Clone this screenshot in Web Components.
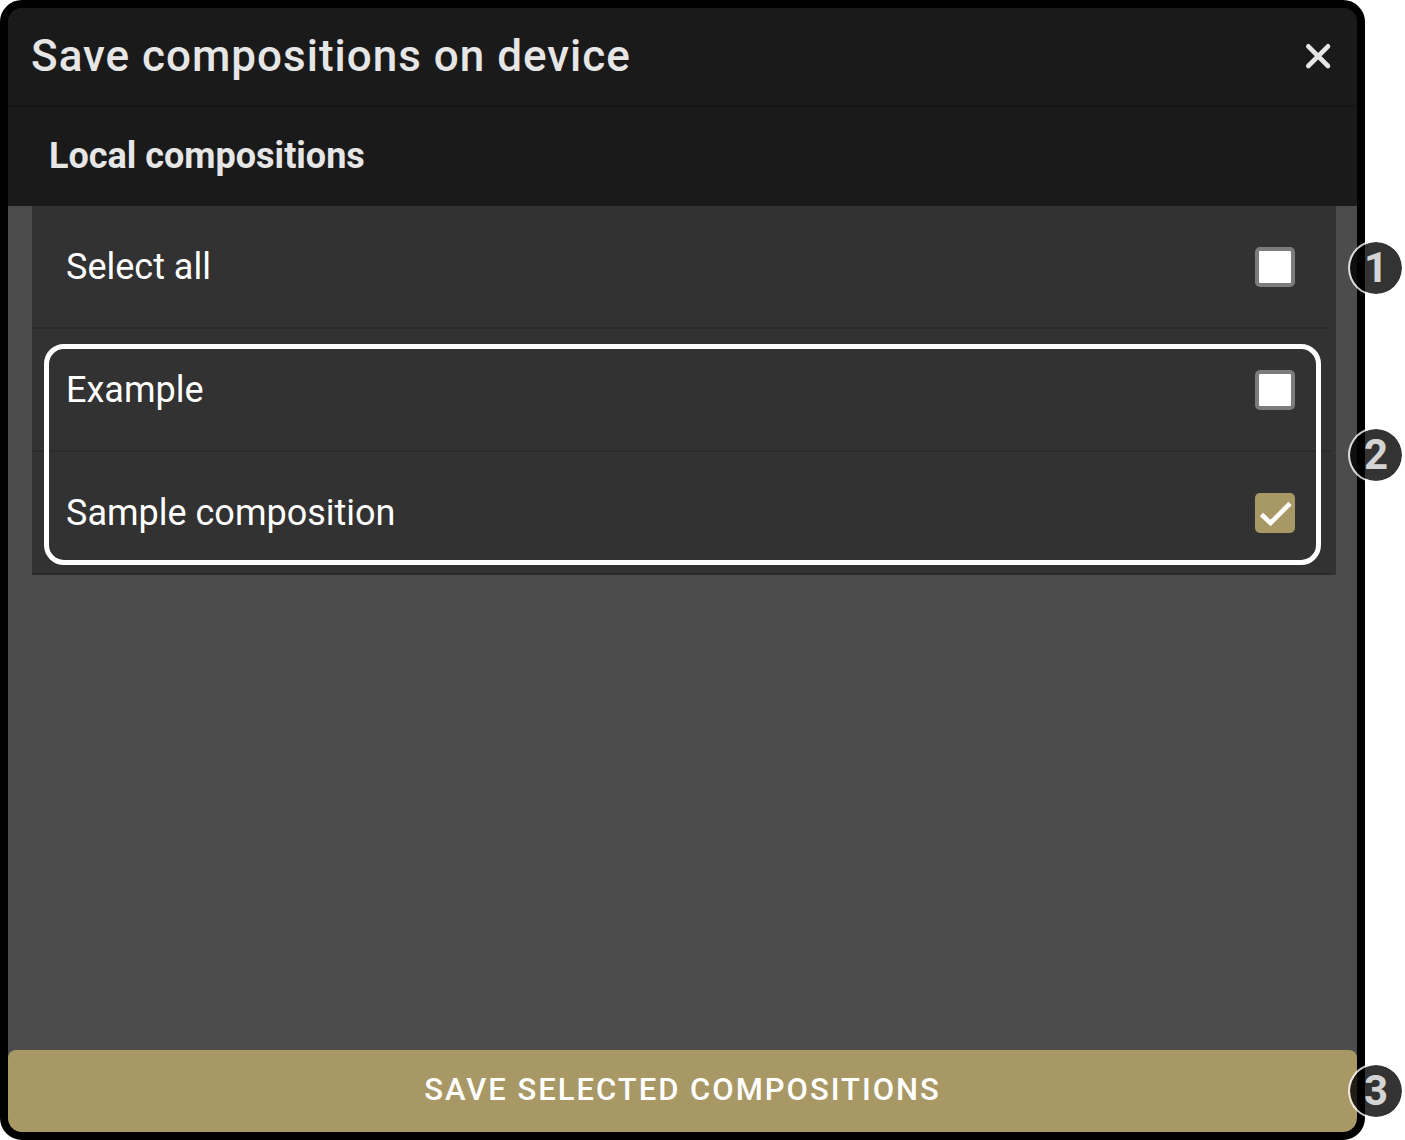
<!DOCTYPE html>
<html lang="en">
<head>
<meta charset="utf-8">
<meta name="viewport" content="width=device-width, initial-scale=1">
<title>Save compositions on device</title>
<style>
  :root {
    --color-frame: #000;
    --color-bar: #1a1a1a;
    --color-body: #4c4c4c;
    --color-row: #323232;
    --color-divider: #2b2b2b;
    --color-accent: #a89865;
    --color-title: #e6e6e6;
  }
  body {
    margin: 0;
    background: #fff;
    color: #fff;
    font-family: Roboto, "Liberation Sans", sans-serif;
  }
</style>
</head>
<body>
<sc-dialog>
  <span slot="title">Save compositions on device</span>
  <span slot="subtitle">Local compositions</span>
  <sc-row>Select all<sc-callout slot="callout">1</sc-callout></sc-row>
  <sc-group>
    <sc-row>Example</sc-row>
    <sc-row checked>Sample composition</sc-row>
    <sc-callout slot="callout">2</sc-callout>
  </sc-group>
  <sc-save slot="action">SAVE SELECTED COMPOSITIONS<sc-callout slot="callout">3</sc-callout></sc-save>
</sc-dialog>

<script>
const define = (name, html, setup) => {
  const template = document.createElement("template");
  template.innerHTML = html;

  customElements.define(name, class extends HTMLElement {
    constructor() {
      super();
      this.attachShadow({ mode: "open" }).appendChild(template.content.cloneNode(true));
    }

    connectedCallback() {
      if (setup) setup(this);
    }
  });
};

define("sc-dialog", `
  <style>
    :host {
      display: flex;
      box-sizing: border-box;
      min-height: 100vh;
      padding-right: 40px;
    }
    .dialog {
      flex: 1;
      display: flex;
      flex-direction: column;
      border: 8px solid var(--color-frame);
      border-radius: 22px;
      background: linear-gradient(var(--color-bar) 50%, var(--color-frame) 50%);
    }
    header {
      display: flex;
      align-items: center;
      justify-content: space-between;
      padding: 20px 25px 21px 23px;
      border-bottom: 2px solid #161616;
      border-radius: 14px 14px 0 0;
      background: var(--color-bar);
      color: var(--color-title);
    }
    h1 {
      margin: 0;
      font-size: 44px;
      line-height: 56px;
      font-weight: 500;
      letter-spacing: 1px;
    }
    h2 {
      margin: 0;
      padding: 25px 41px 26px;
      background: var(--color-bar);
      color: var(--color-title);
      font-size: 36px;
      line-height: 48px;
      font-weight: 700;
    }
    button {
      display: flex;
      padding: 0;
      border: 0;
      background: none;
      color: inherit;
      cursor: pointer;
    }
    main {
      flex: 1;
      padding: 0 21px 0 24px;
      background: var(--color-body);
    }
    .list {
      background: var(--color-row);
    }
    footer {
      background: linear-gradient(var(--color-body) 50%, transparent 50%);
    }
  </style>
  <section class="dialog" role="dialog" aria-labelledby="title">
    <header>
      <h1 id="title"><slot name="title"></slot></h1>
      <button type="button" aria-label="Close">
        <svg width="28" height="28" viewBox="0 0 28 28" fill="none" stroke="currentColor" stroke-width="4.600" stroke-linecap="round">
          <path d="M4.300 4.300 24 24M24 4.300 4.300 24"/>
        </svg>
      </button>
    </header>
    <h2><slot name="subtitle"></slot></h2>
    <main><div class="list"><slot></slot></div></main>
    <footer><slot name="action"></slot></footer>
  </section>
`);

define("sc-row", `
  <style>
    :host {
      display: block;
      position: relative;
      --callout-right: -68px;
    }
    label {
      display: flex;
      align-items: center;
      justify-content: space-between;
      gap: 24px;
      padding: 37px 41px 36px 34px;
      font-size: 36px;
      line-height: 48px;
    }
    .divider {
      height: 2px;
      margin-right: 5px;
      background: var(--color-divider);
    }
    input {
      flex: none;
      appearance: none;
      box-sizing: border-box;
      width: 40px;
      height: 40px;
      margin: 0;
      border: 4px solid #7c7c7c;
      border-radius: 5px;
      background: #fff;
    }
    .box {
      display: grid;
    }
    .box > * {
      grid-area: 1 / 1;
    }
    svg {
      display: none;
      pointer-events: none;
    }
    input:checked {
      border-color: var(--color-accent);
      background: var(--color-accent);
    }
    input:checked + svg {
      display: block;
    }
  </style>
  <label>
    <span><slot></slot></span>
    <span class="box">
      <input type="checkbox">
      <svg width="40" height="40" viewBox="0 0 40 40" fill="none" stroke="#fff" stroke-width="4.600">
        <path d="M6.500 21.500 15.500 30 35 10.500"/>
      </svg>
    </span>
  </label>
  <div class="divider"></div>
  <slot name="callout"></slot>
`, (row) => {
  row.shadowRoot.querySelector("input").checked = row.hasAttribute("checked");
});

define("sc-group", `
  <style>
    :host {
      display: block;
      position: relative;
    }
    /* outline drawn over the rows it groups */
    .outline {
      position: absolute;
      inset: 15px 15px 10px 12px;
      border: 5px solid #fff;
      border-radius: 20px;
      pointer-events: none;
      --callout-right: -88px;
    }
  </style>
  <slot></slot>
  <div class="outline"><slot name="callout"></slot></div>
`);

define("sc-save", `
  <style>
    :host {
      display: block;
      position: relative;
      --callout-right: -47px;
    }
    button {
      display: block;
      width: 100%;
      padding: 16px 16px 18px;
      border: 0;
      border-radius: 8px 8px 14px 14px;
      background: var(--color-accent);
      color: #fff;
      font: 500 31px/48px Roboto, "Liberation Sans", sans-serif;
      letter-spacing: 2px;
      cursor: pointer;
    }
  </style>
  <button type="button"><slot></slot></button>
  <slot name="callout"></slot>
`);

define("sc-callout", `
  <style>
    :host {
      position: absolute;
      top: calc(50% - 28px);
      right: var(--callout-right);
      box-sizing: border-box;
      width: 56px;
      height: 56px;
      border: 2px solid rgba(255, 255, 255, .8);
      border-radius: 50%;
      background: rgba(0, 0, 0, .8) padding-box;
      color: #d4d4d4;
      font-size: 42px;
      line-height: 52px;
      font-weight: 700;
      text-align: center;
    }
  </style>
  <slot></slot>
`);
</script>
</body>
</html>
